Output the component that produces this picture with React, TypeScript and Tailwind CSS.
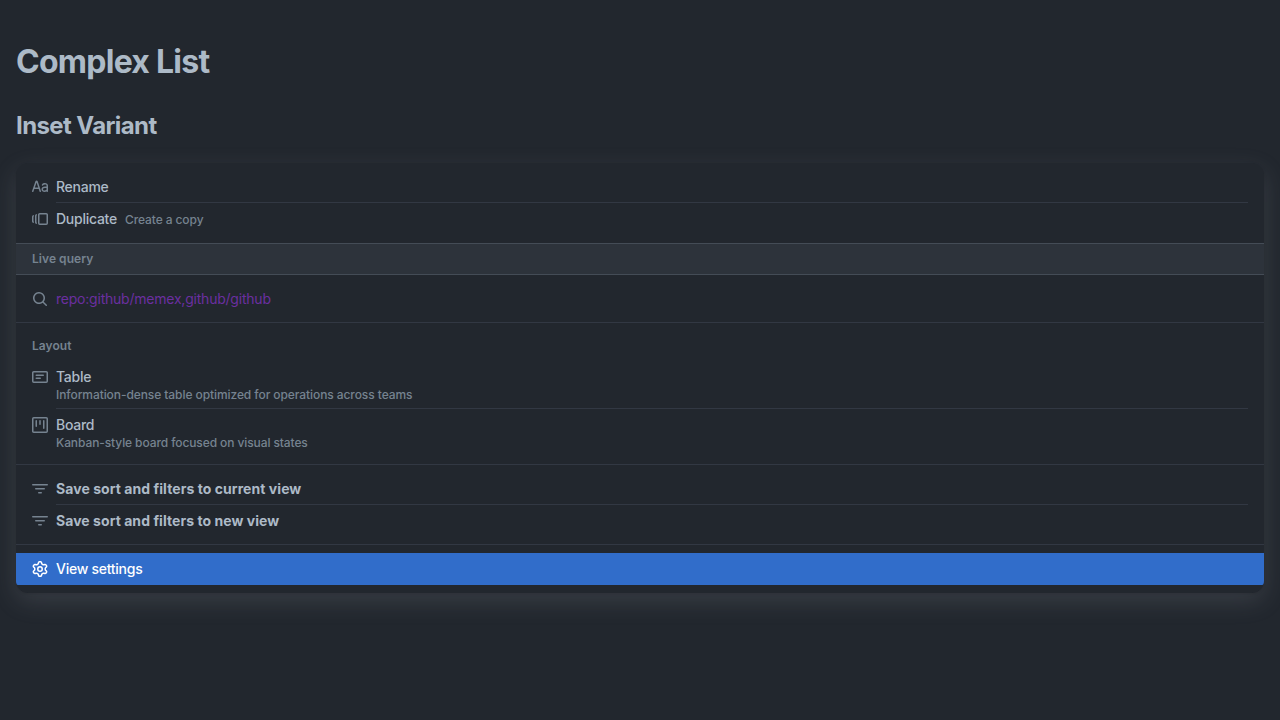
import type { ReactNode } from 'react';

const icons = {
  typography:
    'M6.21 8.5L4.574 3.594 2.857 8.5H6.21zm.5 1.5l.829 2.487a.75.75 0 001.423-.474L5.735 2.332a1.216 1.216 0 00-2.302-.018l-3.39 9.688a.75.75 0 001.415.496L2.332 10H6.71zm3.13-4.358C10.53 4.374 11.87 4 13 4c1.5 0 3 .939 3 2.601v5.649a.75.75 0 01-1.448.275C13.995 12.82 13.3 13 12.5 13c-.77 0-1.514-.231-2.078-.709-.577-.488-.922-1.199-.922-2.041 0-.694.265-1.411.887-1.944C11 7.78 11.88 7.5 13 7.5h1.5v-.899c0-.54-.5-1.101-1.5-1.101-.869 0-1.528.282-1.84.858a.75.75 0 11-1.32-.716zM14.5 9H13c-.881 0-1.375.22-1.637.444-.253.217-.363.5-.363.806 0 .408.155.697.39.896.249.21.63.354 1.11.354.732 0 1.26-.209 1.588-.449.35-.257.412-.495.412-.551V9z',
  versions:
    'M7.75 14A1.75 1.75 0 016 12.25v-8.5C6 2.784 6.784 2 7.75 2h6.5c.966 0 1.75.784 1.75 1.75v8.5A1.75 1.75 0 0114.25 14h-6.5zm-.25-1.75c0 .138.112.25.25.25h6.5a.25.25 0 00.25-.25v-8.5a.25.25 0 00-.25-.25h-6.5a.25.25 0 00-.25.25v8.5zM4.9 3.508a.75.75 0 01-.274 1.025.25.25 0 00-.126.217v6.5a.25.25 0 00.126.217.75.75 0 01-.752 1.298A1.75 1.75 0 013 11.25v-6.5c0-.649.353-1.214.874-1.516a.75.75 0 011.025.274zM1.625 5.533a.75.75 0 10-.752-1.299A1.75 1.75 0 000 5.75v4.5c0 .649.353 1.214.874 1.515a.75.75 0 10.752-1.298.25.25 0 01-.126-.217v-4.5a.25.25 0 01.126-.217z',
  search:
    'M11.5 7a4.499 4.499 0 11-8.998 0A4.499 4.499 0 0111.5 7zm-.82 4.74a6 6 0 111.06-1.06l3.04 3.04a.75.75 0 11-1.06 1.06l-3.04-3.04z',
  note: 'M0 3.75C0 2.784.784 2 1.75 2h12.5c.966 0 1.75.784 1.75 1.75v8.5A1.75 1.75 0 0114.25 14H1.75A1.75 1.75 0 010 12.25v-8.5zm1.75-.25a.25.25 0 00-.25.25v8.5c0 .138.112.25.25.25h12.5a.25.25 0 00.25-.25v-8.5a.25.25 0 00-.25-.25H1.75zM3.5 6.25a.75.75 0 01.75-.75h7a.75.75 0 010 1.5h-7a.75.75 0 01-.75-.75zm.75 2.25a.75.75 0 000 1.5h4a.75.75 0 000-1.5h-4z',
  project:
    'M1.75 0A1.75 1.75 0 000 1.75v12.5C0 15.216.784 16 1.75 16h12.5A1.75 1.75 0 0016 14.25V1.75A1.75 1.75 0 0014.25 0H1.75zM1.5 1.75a.25.25 0 01.25-.25h12.5a.25.25 0 01.25.25v12.5a.25.25 0 01-.25.25H1.75a.25.25 0 01-.25-.25V1.75zM11.75 3a.75.75 0 00-.75.75v7.5a.75.75 0 001.5 0v-7.5a.75.75 0 00-.75-.75zm-8.25.75a.75.75 0 011.5 0v5.5a.75.75 0 01-1.5 0v-5.5zM8 3a.75.75 0 00-.75.75v3.5a.75.75 0 001.5 0v-3.5A.75.75 0 008 3z',
  filter:
    'M.75 3a.75.75 0 000 1.5h14.5a.75.75 0 000-1.5H.75zM3 7.75A.75.75 0 013.75 7h8.5a.75.75 0 010 1.5h-8.5A.75.75 0 013 7.75zm3 4a.75.75 0 01.75-.75h2.5a.75.75 0 010 1.5h-2.5a.75.75 0 01-.75-.75z',
  gear: 'M7.429 1.525a6.593 6.593 0 011.142 0c.036.003.108.036.137.146l.289 1.105c.147.56.55.967.997 1.189.174.086.341.183.501.29.417.278.97.423 1.53.27l1.102-.303c.11-.03.175.016.195.046.219.31.41.641.573.989.014.031.022.11-.059.19l-.815.806c-.411.406-.562.957-.53 1.456a4.588 4.588 0 010 .582c-.032.499.119 1.05.53 1.456l.815.806c.08.08.073.159.059.19a6.494 6.494 0 01-.573.99c-.02.029-.086.074-.195.045l-1.103-.303c-.559-.153-1.112-.008-1.529.27-.16.107-.327.204-.5.29-.449.222-.851.628-.998 1.189l-.289 1.105c-.029.11-.101.143-.137.146a6.613 6.613 0 01-1.142 0c-.036-.003-.108-.037-.137-.146l-.289-1.105c-.147-.56-.55-.967-.997-1.189a4.502 4.502 0 01-.501-.29c-.417-.278-.97-.423-1.53-.27l-1.102.303c-.11.03-.175-.016-.195-.046a6.492 6.492 0 01-.573-.989c-.014-.031-.022-.11.059-.19l.815-.806c.411-.406.562-.957.53-1.456a4.587 4.587 0 010-.582c.032-.499-.119-1.05-.53-1.456l-.815-.806c-.08-.08-.073-.159-.059-.19a6.44 6.44 0 01.573-.99c.02-.029.086-.075.195-.045l1.103.303c.559.153 1.112.008 1.529-.27.16-.107.327-.204.5-.29.449-.222.851-.628.998-1.189l.289-1.105c.029-.11.101-.143.137-.146zM8 0c-.236 0-.47.01-.701.03-.743.065-1.29.615-1.458 1.261l-.29 1.106c-.017.066-.078.158-.211.224a5.994 5.994 0 00-.668.386c-.123.082-.233.09-.3.071L3.27 2.776c-.644-.177-1.392.02-1.82.63a7.977 7.977 0 00-.704 1.217c-.315.675-.111 1.422.363 1.891l.815.806c.05.048.098.147.088.294a6.084 6.084 0 000 .772c.01.147-.038.246-.088.294l-.815.806c-.474.469-.678 1.216-.363 1.891.2.428.436.835.704 1.218.428.609 1.176.806 1.82.63l1.103-.303c.066-.019.176-.011.299.071.213.143.436.272.668.386.133.066.194.158.212.224l.289 1.106c.169.646.715 1.196 1.458 1.26a8.094 8.094 0 001.402 0c.743-.064 1.29-.614 1.458-1.26l.29-1.106c.017-.066.078-.158.211-.224a5.98 5.98 0 00.668-.386c.123-.082.233-.09.3-.071l1.102.302c.644.177 1.392-.02 1.82-.63.268-.382.505-.789.704-1.217.315-.675.111-1.422-.364-1.891l-.814-.806c-.05-.048-.098-.147-.088-.294a6.1 6.1 0 000-.772c-.01-.147.039-.246.088-.294l.814-.806c.475-.469.679-1.216.364-1.891a7.992 7.992 0 00-.704-1.218c-.428-.609-1.176-.806-1.82-.63l-1.103.303c-.066.019-.176.011-.299-.071a5.991 5.991 0 00-.668-.386c-.133-.066-.194-.158-.212-.224L10.16 1.29C9.99.645 9.444.095 8.701.031A8.094 8.094 0 008 0zm1.5 8a1.5 1.5 0 11-3 0 1.5 1.5 0 013 0zM11 8a3 3 0 11-6 0 3 3 0 016 0z',
};

type ItemProps = {
  icon: keyof typeof icons;
  children: ReactNode;
  iconClass?: string;
  className?: string;
  divided?: boolean;
};

function Item({ icon, children, iconClass = 'text-[#768390]', className = '', divided = false }: ItemProps) {
  return (
    <div className={`flex gap-2 px-4 ${className}`}>
      <div className={`flex h-5 w-4 shrink-0 items-center mt-1.5 ${iconClass}`}>
        <svg width="16" height="16" viewBox="0 0 16 16" fill="currentColor" fillRule="evenodd" aria-hidden="true">
          <path fillRule="evenodd" clipRule="evenodd" d={icons[icon]} />
        </svg>
      </div>
      <div className={`grow pt-1.5 ${divided ? 'border-b border-[#323843] pb-[5px]' : 'pb-1.5'}`}>{children}</div>
    </div>
  );
}

function Divider() {
  return <div className="mt-[7px] mb-2 h-px bg-[#323843]" />;
}

export default function App() {
  return (
    <div className="min-h-screen overflow-hidden bg-[#22272e] px-4 font-['Inter',sans-serif] text-sm leading-5 font-[450] tracking-[-0.26px] text-[#adbac7]">
      <h1 className="mt-[38px] text-[32px] leading-12 font-bold tracking-[-0.74px]">Complex List</h1>
      <h2 className="mt-[22px] text-2xl leading-9 font-bold tracking-[-0.6px]">Inset Variant</h2>
      <div className="mt-[19px] overflow-hidden rounded-xl py-2 shadow-[0_1px_3px_rgba(0,0,0,0.12),0_8px_24px_rgba(149,157,165,0.2)]">
        <Item icon="typography" divided>
          Rename
        </Item>
        <Item icon="versions">
          <div className="flex items-baseline gap-2">
            <span>Duplicate</span>
            <span className="text-xs leading-4 tracking-[-0.09px] text-[#768390]">Create a copy</span>
          </div>
        </Item>
        <div className="my-2 border-y border-[#444c56] bg-[#2d333b] px-4 py-1.5 text-xs leading-[18px] font-semibold tracking-[0.05px] text-[#768390]">
          Live query
        </div>
        <Item icon="search">
          <a className="font-normal tracking-[-0.22px] text-[#6b2fa0]">repo:github/memex,github/github</a>
        </Item>
        <Divider />
        <div className="px-4 py-1.5 text-xs leading-[18px] font-semibold tracking-[0.05px] text-[#768390]">Layout</div>
        <Item icon="note" divided>
          <div>Table</div>
          <div className="text-xs leading-4 tracking-[-0.08px] text-[#768390]">Information-dense table optimized for operations across teams</div>
        </Item>
        <Item icon="project">
          <div>Board</div>
          <div className="text-xs leading-4 tracking-[-0.1px] text-[#768390]">Kanban-style board focused on visual states</div>
        </Item>
        <Divider />
        <Item icon="filter" className="font-bold tracking-[0.06px]" divided>
          Save sort and filters to current view
        </Item>
        <Item icon="filter" className="font-bold tracking-[0.05px]">
          Save sort and filters to new view
        </Item>
        <Divider />
        <Item icon="gear" className="rounded-b-[2px] bg-[#316dca] text-white" iconClass="text-white">
          View settings
        </Item>
      </div>
    </div>
  );
}
